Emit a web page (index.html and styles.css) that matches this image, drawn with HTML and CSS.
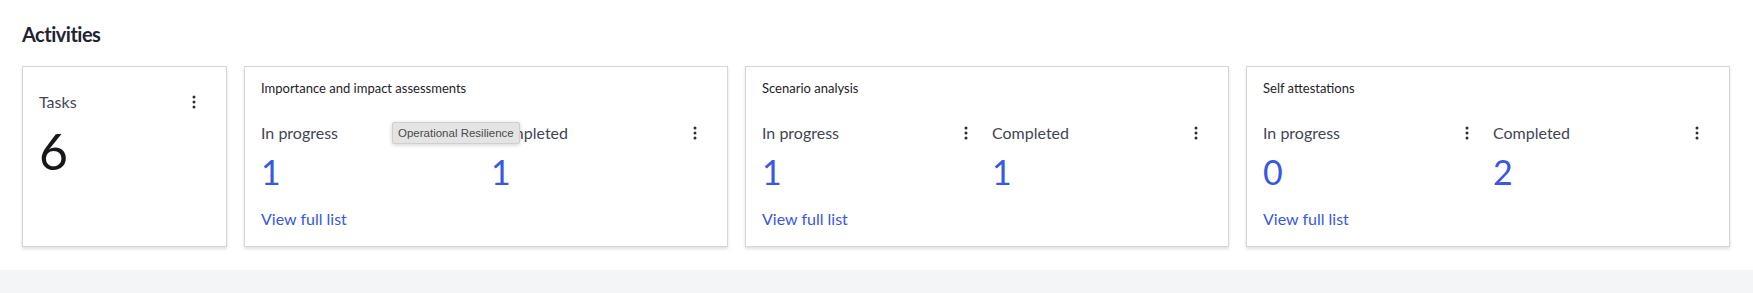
FILE: index.html
```html
<!DOCTYPE html>
<html lang="en">
<head>
<meta charset="utf-8">
<title>Activities</title>
<link rel="stylesheet" href="styles.css">
</head>
<body>
<main class="page">
  <section class="activities">
    <h2 class="heading">Activities</h2>
    <div class="cards">
      <div class="card card-tasks">
        <div class="row">
          <span class="label">Tasks</span>
          <button class="kebab" aria-label="More"><svg width="4" height="14" viewBox="0 0 4 14"><circle cx="2" cy="2" r="1.5"/><circle cx="2" cy="7" r="1.5"/><circle cx="2" cy="12" r="1.5"/></svg></button>
        </div>
        <div class="big">6</div>
      </div>

      <div class="card">
        <div class="title">Importance and impact assessments</div>
        <div class="cols">
          <div class="col">
            <div class="row"><span class="label">In progress</span></div>
            <div class="num">1</div>
          </div>
          <div class="col">
            <div class="row"><span class="label">Completed</span>
              <button class="kebab" aria-label="More"><svg width="4" height="14" viewBox="0 0 4 14"><circle cx="2" cy="2" r="1.5"/><circle cx="2" cy="7" r="1.5"/><circle cx="2" cy="12" r="1.5"/></svg></button></div>
            <div class="num">1</div>
          </div>
        </div>
        <a class="link" href="#">View full list</a>
        <div class="tooltip">Operational Resilience</div>
      </div>

      <div class="card">
        <div class="title">Scenario analysis</div>
        <div class="cols">
          <div class="col">
            <div class="row"><span class="label">In progress</span>
              <button class="kebab" aria-label="More"><svg width="4" height="14" viewBox="0 0 4 14"><circle cx="2" cy="2" r="1.5"/><circle cx="2" cy="7" r="1.5"/><circle cx="2" cy="12" r="1.5"/></svg></button></div>
            <div class="num">1</div>
          </div>
          <div class="col">
            <div class="row"><span class="label">Completed</span>
              <button class="kebab" aria-label="More"><svg width="4" height="14" viewBox="0 0 4 14"><circle cx="2" cy="2" r="1.5"/><circle cx="2" cy="7" r="1.5"/><circle cx="2" cy="12" r="1.5"/></svg></button></div>
            <div class="num">1</div>
          </div>
        </div>
        <a class="link" href="#">View full list</a>
      </div>

      <div class="card">
        <div class="title">Self attestations</div>
        <div class="cols">
          <div class="col">
            <div class="row"><span class="label">In progress</span>
              <button class="kebab" aria-label="More"><svg width="4" height="14" viewBox="0 0 4 14"><circle cx="2" cy="2" r="1.5"/><circle cx="2" cy="7" r="1.5"/><circle cx="2" cy="12" r="1.5"/></svg></button></div>
            <div class="num">0</div>
          </div>
          <div class="col">
            <div class="row"><span class="label">Completed</span>
              <button class="kebab" aria-label="More"><svg width="4" height="14" viewBox="0 0 4 14"><circle cx="2" cy="2" r="1.5"/><circle cx="2" cy="7" r="1.5"/><circle cx="2" cy="12" r="1.5"/></svg></button></div>
            <div class="num">2</div>
          </div>
        </div>
        <a class="link" href="#">View full list</a>
      </div>
    </div>
  </section>
  <div class="footer-band"></div>
</main>
</body>
</html>
```

FILE: styles.css
```css
* { box-sizing: border-box; }
html, body { margin: 0; padding: 0; background: #ffffff; }
body {
  font-family: Lato, "Open Sans", "Liberation Sans", sans-serif;
  color: #404755;
}
.page { width: 1753px; height: 293px; display: flex; flex-direction: column; }
.activities {
  height: 270px;
  padding: 22px 23px 0 22px;
}
.heading {
  margin: 0;
  font-size: 20px;
  line-height: 24px;
  font-weight: 700;
  letter-spacing: -0.5px;
  color: #1f2431;
}
.cards {
  margin-top: 20px;
  display: grid;
  grid-template-columns: 205px 1fr 1fr 1fr;
  gap: 17px;
  height: 181px;
}
.card {
  position: relative;
  background: #fff;
  border: 1px solid #d5d6db;
  box-shadow: 0 2px 3px rgba(0, 0, 0, 0.13);
  padding: 11px 16px 0 16px;
  display: flex;
  flex-direction: column;
}
.card-tasks { padding-top: 23px; }
.row {
  display: flex;
  align-items: center;
  justify-content: space-between;
  height: 24px;
}
.label {
  font-size: 16px;
  line-height: 24px;
  color: #3f4654;
}
.kebab {
  width: 32px;
  height: 24px;
  padding: 0;
  border: 0;
  background: transparent;
  display: flex;
  align-items: center;
  justify-content: center;
  fill: #2b2f36;
}
.big {
  margin-top: 7px;
  font-size: 50px;
  line-height: 60px;
  font-weight: 400;
  color: #16181c;
}
.title {
  font-size: 13px;
  line-height: 20px;
  color: #1f2228;
}
.cols {
  margin-top: 23px;
  display: grid;
  grid-template-columns: 1fr 1fr;
  column-gap: 10px;
}
.num {
  margin-top: 7px;
  font-size: 34px;
  line-height: 40px;
  color: #3757e4;
}
.link {
  margin-top: 15px;
  font-size: 16px;
  line-height: 24px;
  color: #3757e4;
  text-decoration: none;
  align-self: flex-start;
}
.tooltip {
  position: absolute;
  left: 147px;
  top: 55px;
  height: 22px;
  padding: 0 5px;
  background: #e4e4e4;
  border: 1px solid #cfcfcf;
  border-radius: 2px;
  box-shadow: 0 1px 4px rgba(0, 0, 0, 0.18);
  font-family: "Liberation Sans", Arial, sans-serif;
  font-size: 11.5px;
  line-height: 20px;
  color: #4a4a4a;
  white-space: nowrap;
}
.footer-band {
  flex: 1;
  background: #f4f5f7;
}
```
